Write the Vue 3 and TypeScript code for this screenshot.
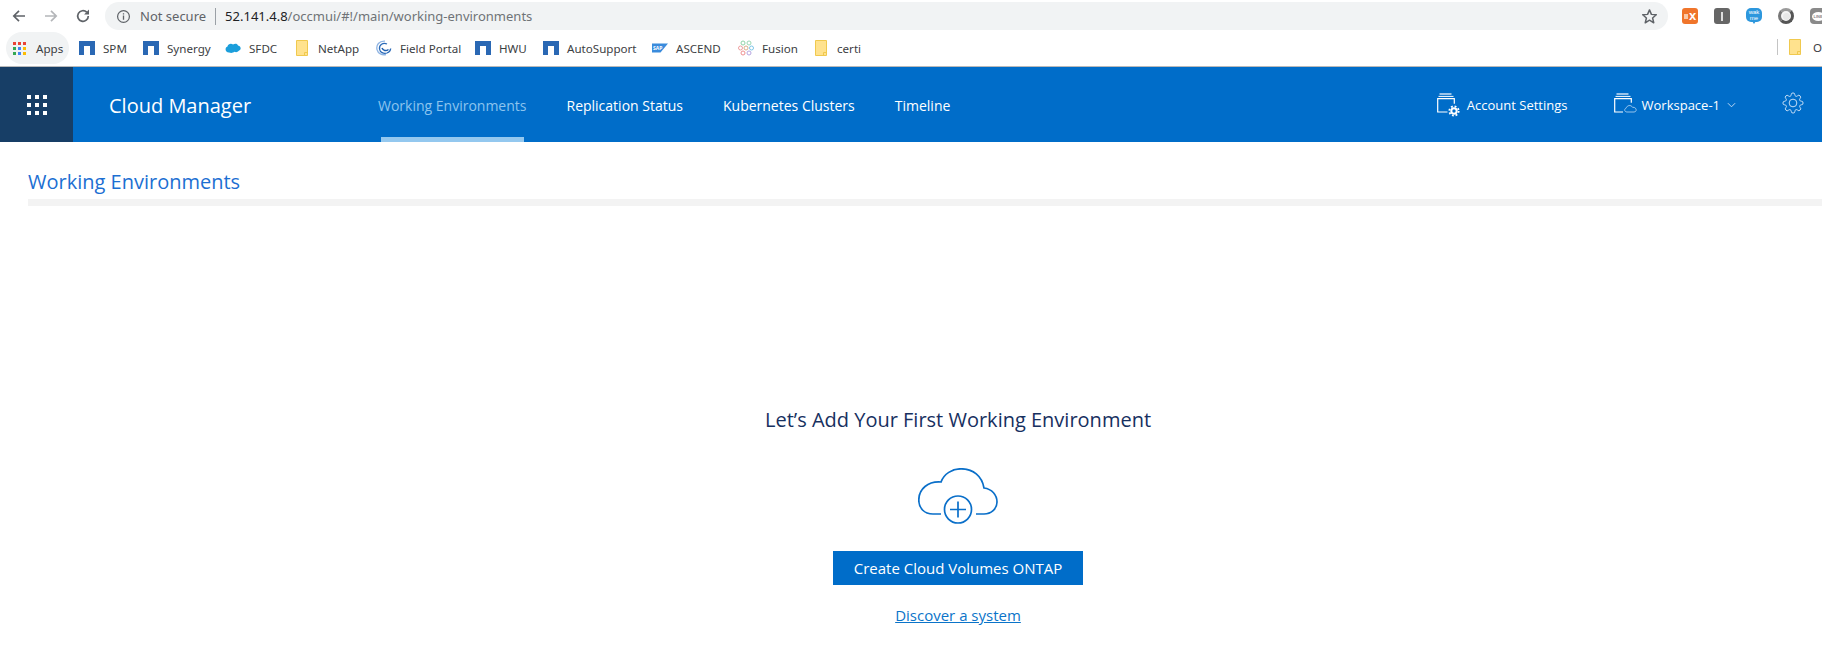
<template>
  <div class="page">
    <!-- Browser chrome -->
    <div class="toolbar">
      <svg class="nav-btn" viewBox="0 0 16 16"><path d="M14 8H3M8 2.800 2.800 8 8 13.200" fill="none" stroke="#5f6368" stroke-width="1.700" /></svg>
      <svg class="nav-btn" viewBox="0 0 16 16"><path d="M2 8h11M8 2.800 13.200 8 8 13.200" fill="none" stroke="#b4b6b9" stroke-width="1.700" /></svg>
      <svg class="nav-btn" viewBox="0 0 16 16"><path d="M13.300 8a5.300 5.300 0 1 1-1.600-3.800" fill="none" stroke="#5f6368" stroke-width="1.700" /><path d="M14 1.600v4.900H9.100z" fill="#5f6368" /></svg>
      <div class="omnibox">
        <svg class="info" viewBox="0 0 16 16"><circle cx="8" cy="8" r="6.300" fill="none" stroke="#5f6368" stroke-width="1.300" /><path d="M7.300 7h1.400v4.400H7.300zM7.300 4.400h1.400v1.500H7.300z" fill="#5f6368" /></svg>
        <span class="secure">Not secure</span>
        <span class="pipe" />
        <span class="host">52.141.4.8</span><span class="path">/occmui/#!/main/working-environments</span>
        <svg class="star" viewBox="0 0 16 16"><path d="M8 1.800 9.800 6l4.600.4-3.500 3 1.100 4.500L8 11.500l-4 2.400 1.100-4.500-3.500-3L6.200 6z" fill="none" stroke="#5f6368" stroke-width="1.400" stroke-linejoin="round" /></svg>
      </div>
      <div class="extensions">
        <span class="ext ext-ex"><i />x</span>
        <span class="ext ext-i"><i /></span>
        <span class="ext ext-wak">wak<br />me</span>
        <span class="ext ext-ball"><i /></span>
        <span class="ext ext-line"><b>LINE</b></span>
      </div>
    </div>

    <div class="bookmarks">
      <div class="apps">
        <span class="apps-grid"><i v-for="(c, i) in appColors" :key="i" :style="{ background: c }" /></span>
        <span>Apps</span>
      </div>
      <div v-for="b in bookmarks" :key="b.label" class="bookmark" :style="{ width: b.width + 'px' }">
        <svg v-if="b.icon === 'netapp'" class="bm-icon" viewBox="0 0 16 16"><path d="M0 1h16v14h-5V6H5v9H0z" fill="#2a68b4" /></svg>
        <svg v-else-if="b.icon === 'cloud'" class="bm-icon" viewBox="0 0 16 16"><path d="M4 12.500C0 12.500-.5 7.500 2.500 6.500 3 3.500 6.500 3 8 4.500 10 3 12.500 3.500 13 5.500c3.300.5 3.500 4.500.8 5.300-1 1.500-3 1.700-4.300 1-1.500 1.300-3.800 1.400-5.500.7z" fill="#1b9edb" /></svg>
        <svg v-else-if="b.icon === 'folder'" class="bm-folder" viewBox="0 0 12 16"><path d="M.5.500h11v15H.5z" fill="#ffe28e" stroke="#f0c94e" /><path d="M8.500 15.500v-3h3" fill="none" stroke="#f0c94e" /></svg>
        <svg v-else-if="b.icon === 'portal'" class="bm-icon" viewBox="0 0 16 16"><path d="M9 1.200C3 .8 0 5 1 9.500c1 4 5 6 9 5" fill="none" stroke="#8fb4e3" stroke-width="1.300" /><path d="M11 4C7 2 3 5 3.500 9c.5 3.500 4 5 7.500 4 2-.7 3.500-2.500 3.700-4.500" fill="none" stroke="#2a6ab8" stroke-width="1.300" /><path d="M6 8c1 2.500 4 3.500 6.500 1.500" fill="none" stroke="#1f5fae" stroke-width="1.500" /></svg>
        <svg v-else-if="b.icon === 'sap'" class="bm-icon" viewBox="0 0 16 16"><path d="M0 3.500h16L8.500 12.500H0z" fill="#3a8bdc" /><text x="1" y="9.500" font-size="5" font-weight="700" fill="#fff">SAP</text></svg>
        <svg v-else class="bm-icon" viewBox="0 0 16 16"><g fill="none" stroke-width="1"><circle cx="5" cy="3" r="2" stroke="#8fd3a6" /><circle cx="11" cy="3" r="2" stroke="#9bd7b3" /><circle cx="2.500" cy="8" r="2" stroke="#ef9f9f" /><circle cx="13.500" cy="8" r="2" stroke="#7cc6e8" /><circle cx="5" cy="13" r="2" stroke="#ee8f8f" /><circle cx="11" cy="13" r="2" stroke="#b6a6e0" /><circle cx="8" cy="8" r="2" stroke="#d9b08c" /></g></svg>
        <span class="bm-label">{{ b.label }}</span>
      </div>
      <div class="bm-other">
        <span class="bm-sep" />
        <svg class="bm-folder" viewBox="0 0 12 16"><path d="M.5.500h11v15H.5z" fill="#ffe28e" stroke="#f0c94e" /><path d="M8.500 15.500v-3h3" fill="none" stroke="#f0c94e" /></svg>
        <span class="bm-label">Other bookmarks</span>
      </div>
    </div>

    <!-- App header -->
    <header class="header">
      <div class="tile">
        <span class="dots"><i v-for="n in 9" :key="n" /></span>
      </div>
      <div class="brand">Cloud Manager</div>
      <nav class="tabs">
        <a v-for="t in tabs" :key="t" class="tab" :class="{ active: t === 'Working Environments' }">{{ t }}</a>
      </nav>
      <div class="account">
        <svg class="hd-icon" viewBox="0 0 24 24" fill="none" stroke="#fff">
          <path d="M2.500 1h12" stroke="#dbe9f7" stroke-width="1.400" />
          <path d="M1.500 3.400h15" stroke-width="1" />
          <path d="M10.500 19H.7V5.700h16.600v5" stroke-width="1.200" />
          <circle cx="17" cy="18" r="2.700" stroke-width="2" />
          <circle cx="17" cy="18" r="4.700" stroke-width="1.800" stroke-dasharray="1.850 1.850" />
        </svg>
        <span>Account Settings</span>
      </div>
      <div class="workspace">
        <svg class="hd-icon" viewBox="0 0 24 24" fill="none" stroke="#fff">
          <path d="M2.500 1h12" stroke="#dbe9f7" stroke-width="1.400" />
          <path d="M1.500 3.400h15" stroke-width="1" />
          <path d="M9 19H.7V5.700h16.600v4" stroke-width="1.200" />
          <path d="M13 19c-2.800 0-3-3.300-.9-3.800.8-3 5-3.700 6.400-.9 2.700-.3 4 1.600 3.600 3.200-.2.900-1 1.500-2 1.500z" stroke="#a6cdf1" stroke-width=".9" />
        </svg>
        <span>Workspace-1</span>
        <svg class="chevron" viewBox="0 0 10 6"><path d="M1 1l4 4 4-4" fill="none" stroke="#cfe3f7" stroke-width="1" /></svg>
      </div>
      <svg class="gear" viewBox="0 0 24 24" fill="none" stroke="#d6e7f8" stroke-width="1">
        <circle cx="12" cy="12" r="4.200" />
        <path d="M19.400 15a1.650 1.650 0 0 0 .33 1.820l.06.06a2 2 0 0 1 0 2.830 2 2 0 0 1-2.830 0l-.06-.06a1.650 1.650 0 0 0-1.820-.33 1.650 1.650 0 0 0-1 1.510V21a2 2 0 0 1-2 2 2 2 0 0 1-2-2v-.09A1.650 1.650 0 0 0 9 19.400a1.650 1.650 0 0 0-1.820.33l-.06.06a2 2 0 0 1-2.830 0 2 2 0 0 1 0-2.830l.06-.06a1.650 1.650 0 0 0 .33-1.820 1.650 1.650 0 0 0-1.510-1H3a2 2 0 0 1-2-2 2 2 0 0 1 2-2h.09A1.650 1.650 0 0 0 4.600 9a1.650 1.650 0 0 0-.33-1.820l-.06-.06a2 2 0 0 1 0-2.830 2 2 0 0 1 2.830 0l.06.06a1.650 1.650 0 0 0 1.820.33H9a1.650 1.650 0 0 0 1-1.510V3a2 2 0 0 1 2-2 2 2 0 0 1 2 2v.09a1.650 1.650 0 0 0 1 1.510 1.650 1.650 0 0 0 1.820-.33l.06-.06a2 2 0 0 1 2.830 0 2 2 0 0 1 0 2.830l-.06.06a1.650 1.650 0 0 0-.33 1.820V9a1.650 1.650 0 0 0 1.510 1H21a2 2 0 0 1 2 2 2 2 0 0 1-2 2h-.09a1.650 1.650 0 0 0-1.510 1z" />
      </svg>
    </header>

    <!-- Page body -->
    <main class="main">
      <h1 class="title">Working Environments</h1>
      <div class="rule" />
      <section class="empty">
        <h2 class="empty-title">Let’s Add Your First Working Environment</h2>
        <svg class="cloud" viewBox="0 0 80 56" fill="none" stroke="#0a6fc9" stroke-width="1.700">
          <path d="M23 46H15C6 46 .8 40 .8 32 .8 21 10 13 23 14 26 6 34 .8 43 .8 55 .8 64 8 66 20 74 21 79 27 79 34 79 41 73 46 66 46H58" />
          <circle cx="40" cy="41.500" r="13.500" />
          <path d="M40 33.500v16M32 41.500h16" />
        </svg>
        <button class="create">Create Cloud Volumes ONTAP</button>
        <a class="discover">Discover a system</a>
      </section>
    </main>
  </div>
</template>

<script setup lang="ts">
interface Bookmark {
  label: string;
  icon: string;
  width: number;
}

const appColors = ['#ea4335', '#ea4335', '#ea4335', '#34a853', '#4285f4', '#fbbc05', '#34a853', '#4285f4', '#fbbc05'];

const bookmarks: Bookmark[] = [
  { label: 'SPM', icon: 'netapp', width: 64 },
  { label: 'Synergy', icon: 'netapp', width: 82 },
  { label: 'SFDC', icon: 'cloud', width: 71 },
  { label: 'NetApp', icon: 'folder', width: 80 },
  { label: 'Field Portal', icon: 'portal', width: 99 },
  { label: 'HWU', icon: 'netapp', width: 68 },
  { label: 'AutoSupport', icon: 'netapp', width: 109 },
  { label: 'ASCEND', icon: 'sap', width: 86 },
  { label: 'Fusion', icon: 'fusion', width: 77 },
  { label: 'certi', icon: 'folder', width: 60 },
];

const tabs = ['Working Environments', 'Replication Status', 'Kubernetes Clusters', 'Timeline'];
</script>

<style>
html,
body {
  margin: 0;
  overflow: hidden;
  background: #fff;
}
</style>

<style scoped>
.page {
  width: 1822px;
  height: 648px;
  overflow: hidden;
  font-family: "Open Sans", sans-serif;
}

.toolbar {
  height: 30px;
  padding: 2px 0 0 11px;
  box-sizing: border-box;
  display: flex;
  align-items: flex-start;
  gap: 16px;
}

.nav-btn {
  width: 16px;
  height: 16px;
  margin-top: 6px;
  flex: none;
}

.omnibox {
  width: 1563px;
  height: 28px;
  margin-left: -2px;
  flex: none;
  box-sizing: border-box;
  padding: 0 10px 0 11px;
  background: #f1f3f4;
  border-radius: 14px;
  display: flex;
  align-items: center;
  font-family: "Noto Sans", sans-serif;
  font-size: 13px;
  white-space: nowrap;
}

.info {
  width: 15px;
  height: 15px;
  margin-right: 9px;
}

.secure {
  color: #5f6368;
}

.pipe {
  width: 1px;
  height: 17px;
  margin: 0 9px;
  background: #9aa0a6;
}

.host {
  color: #202124;
}

.path {
  color: #6f7377;
}

.star {
  width: 17px;
  height: 17px;
  margin-left: auto;
}

.extensions {
  display: flex;
  gap: 16px;
  margin-left: -2px;
  margin-top: 6px;
}

.ext {
  width: 16px;
  height: 16px;
  flex: none;
  border-radius: 3px;
  color: #fff;
  font-family: "Liberation Sans", sans-serif;
  display: flex;
  align-items: center;
  justify-content: center;
  position: relative;
}

.ext-ex {
  background: #f0752b;
  font-size: 13px;
  font-weight: 700;
  line-height: 14px;
  gap: 1px;
}

.ext-ex i {
  width: 4px;
  height: 5px;
  background: #f9c9a8;
}

.ext-i {
  background: #666;
}

.ext-i i {
  width: 2px;
  height: 9px;
  background: #ddd;
}

.ext-wak {
  height: 14px;
  background: #2d97dd;
  font-size: 6px;
  line-height: 6px;
  text-align: center;
  border-radius: 5px;
}

.ext-wak::after {
  content: "";
  position: absolute;
  left: 6px;
  top: 13px;
  border: 2px solid transparent;
  border-top: 3px solid #2d97dd;
}

.ext-ball {
  border-radius: 50%;
  background: #f4f4f4;
  border: 3px solid #777;
  border-right-color: #555;
  border-bottom-color: #555;
  border-top-color: #9a9a9a;
  box-sizing: border-box;
}

.ext-ball i {
  width: 7px;
  height: 7px;
  border-radius: 50%;
  background: #e8e8e8;
}

.ext-line {
  background: #8a8a8a;
  border-radius: 4px;
}

.ext-line b {
  width: 13px;
  height: 9px;
  border-radius: 50%;
  background: #fff;
  color: #8a8a8a;
  font-size: 4px;
  line-height: 9px;
  text-align: center;
}

.bookmarks {
  height: 37px;
  box-sizing: border-box;
  border-bottom: 1px solid #b9b9b9;
  padding-left: 6px;
  display: flex;
  align-items: center;
  font-family: "Noto Sans", sans-serif;
  font-size: 11.600px;
  color: #3c4043;
  position: relative;
}

.apps {
  width: 63px;
  height: 32px;
  margin-right: 10px;
  box-sizing: border-box;
  padding-left: 7px;
  background: #f1f3f4;
  border-radius: 16px;
  display: flex;
  align-items: center;
  gap: 10px;
  flex: none;
}

.apps-grid {
  width: 13px;
  display: grid;
  grid-template-columns: repeat(3, 3px);
  gap: 2px;
}

.apps-grid i {
  height: 3px;
}

.bookmark {
  display: flex;
  align-items: center;
  gap: 8px;
  flex: none;
}

.bm-icon {
  width: 16px;
  height: 16px;
  flex: none;
}

.bm-folder {
  width: 12px;
  height: 16px;
  flex: none;
  margin-right: 2px;
}

.bm-label {
  white-space: nowrap;
}

.bm-other {
  position: absolute;
  left: 1777px;
  top: 9px;
  display: flex;
  align-items: center;
  gap: 10px;
}

.bm-sep {
  width: 1px;
  height: 16px;
  background: #c4c4c4;
  margin-right: 1px;
}

.header {
  height: 75px;
  background: #006dc9;
  display: flex;
  align-items: center;
  color: #fff;
}

.tile {
  width: 73px;
  height: 100%;
  flex: none;
  background: #173e66;
  display: flex;
  align-items: center;
  justify-content: center;
}

.dots {
  display: grid;
  grid-template-columns: repeat(3, 4px);
  gap: 4px;
}

.dots i {
  height: 4px;
  background: #fff;
}

.brand {
  width: 305px;
  padding: 2px 0 0 36px;
  box-sizing: border-box;
  flex: none;
  font-size: 20px;
}

.tabs {
  display: flex;
  height: 100%;
  gap: 40px;
}

.tab {
  height: 100%;
  box-sizing: border-box;
  padding-top: 2px;
  display: flex;
  align-items: center;
  font-size: 14px;
  font-weight: 400;
  position: relative;
  white-space: nowrap;
}

.tab.active {
  color: #8cc4ee;
}

.tab.active::after {
  content: "";
  position: absolute;
  left: 3px;
  right: 2px;
  bottom: 0;
  height: 5px;
  background: #94c8ef;
}

.account,
.workspace {
  display: flex;
  align-items: center;
  font-size: 13px;
  white-space: nowrap;
}

.account {
  margin-left: auto;
  gap: 6px;
}

.workspace {
  margin-left: 46px;
  gap: 4px;
}

.hd-icon {
  width: 24px;
  height: 24px;
}

.chevron {
  width: 9px;
  height: 6px;
  margin-left: 3px;
}

.gear {
  width: 22px;
  height: 22px;
  margin: -4px 18px 0 46px;
  flex: none;
}

.main {
  padding: 26px 0 0 28px;
}

.title {
  margin: 0;
  font-size: 20px;
  line-height: 28px;
  font-weight: 400;
  color: #1c6fd2;
}

.rule {
  height: 7px;
  margin-top: 3px;
  background: #f3f3f3;
}

.empty {
  display: flex;
  flex-direction: column;
  align-items: center;
  padding: 200px 0 0 66px;
  box-sizing: border-box;
  width: 1794px;
}

.empty-title {
  margin: 0;
  font-size: 20px;
  line-height: 28px;
  font-weight: 400;
  color: #17305f;
}

.cloud {
  width: 80px;
  height: 56px;
  margin-top: 34px;
}

.create {
  width: 250px;
  height: 34px;
  margin-top: 27px;
  padding: 0;
  border: 0;
  background: #006dc9;
  color: #fff;
  font-family: inherit;
  font-size: 15px;
  font-weight: 400;
}

.discover {
  margin-top: 20px;
  font-size: 15px;
  color: #0b74c9;
  text-decoration: underline;
}
</style>
